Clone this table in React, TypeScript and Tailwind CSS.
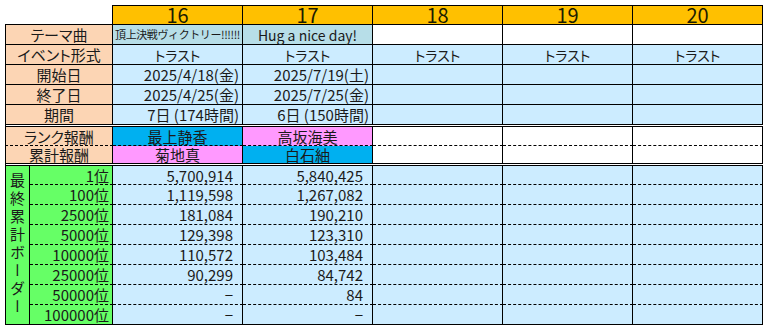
import type { ReactNode } from "react"

const font = "font-['Noto_Sans_CJK_JP','Noto_Sans',sans-serif]"

const LABEL = "bg-[#fcd5b4]"
const BLUE = "bg-[#ccecff]"
const AQUA = "bg-[#b7dee8]"
const CYAN = "bg-[#00b0f0]"
const PINK = "bg-[#ff99ff]"
const GREEN = "bg-[#66ff66]"

function Cell({
  className = "",
  children,
}: {
  className?: string
  children?: ReactNode
}) {
  return (
    <div className={`flex items-center whitespace-nowrap border-r border-b border-black leading-none ${className}`}>
      {children}
    </div>
  )
}

const ranks = ["1位", "100位", "2500位", "5000位", "10000位", "25000位", "50000位", "100000位"]
const border16 = ["5,700,914", "1,119,598", "181,084", "129,398", "110,572", "90,299", "−", "−"]
const border17 = ["5,840,425", "1,267,082", "190,210", "123,310", "103,484", "84,742", "84", "−"]

export default function App() {
  const dash = "[border-bottom-style:dashed]"

  return (
    <div className={`min-h-[326px] w-[764px] bg-white pt-[5px] pl-[5px] text-[#1a1a1a] ${font}`}>
      <div className="grid grid-cols-[25px_83px_repeat(5,130px)] grid-rows-[20px_20px_20px_20px_20px_20px_2px_19px_18px_2px_19px_20px_20px_20px_20px_20px_20px_20px]">
        {/* header row */}
        <div className="col-span-2 border-r border-b border-black" />
        {[16, 17, 18, 19, 20].map((n) => (
          <Cell key={n} className="justify-center border-t bg-[#ffc000] text-[20px] text-[#1c1c00]">
            <span className="leading-[18px]">{n}</span>
          </Cell>
        ))}

        {/* テーマ曲 */}
        <Cell className={`col-span-2 justify-center border-l ${LABEL} text-[15px] [font-feature-settings:'palt']`}>テーマ曲</Cell>
        <Cell className={`justify-center ${AQUA} text-[11px] tracking-[-0.4px]`}>頂上決戦ヴィクトリー!!!!!!</Cell>
        <Cell className={`justify-center ${AQUA} text-[14px]`}>Hug a nice day!</Cell>
        <Cell className="bg-white" />
        <Cell className="bg-white" />
        <Cell className="bg-white" />

        {/* イベント形式 */}
        <Cell className={`col-span-2 justify-center border-l ${LABEL} text-[15px] [font-feature-settings:'palt']`}>イベント形式</Cell>
        {[0, 1, 2, 3, 4].map((i) => (
          <Cell key={i} className={`justify-center ${BLUE} text-[14px] [font-feature-settings:'palt']`}>
            トラスト
          </Cell>
        ))}

        {/* 開始日 */}
        <Cell className={`col-span-2 justify-center border-l ${LABEL} text-[15px]`}>開始日</Cell>
        <Cell className={`justify-end pr-[3px] ${BLUE} text-[15px]`}>2025/4/18(金)</Cell>
        <Cell className={`justify-end pr-[3px] ${BLUE} text-[15px]`}>2025/7/19(土)</Cell>
        <Cell className={BLUE} />
        <Cell className={BLUE} />
        <Cell className={BLUE} />

        {/* 終了日 */}
        <Cell className={`col-span-2 justify-center border-l ${LABEL} text-[15px]`}>終了日</Cell>
        <Cell className={`justify-end pr-[3px] ${BLUE} text-[15px]`}>2025/4/25(金)</Cell>
        <Cell className={`justify-end pr-[3px] ${BLUE} text-[15px]`}>2025/7/25(金)</Cell>
        <Cell className={BLUE} />
        <Cell className={BLUE} />
        <Cell className={BLUE} />

        {/* 期間 */}
        <Cell className={`col-span-2 justify-center border-l ${LABEL} text-[15px]`}>期間</Cell>
        <Cell className={`justify-end pr-[3px] ${BLUE} text-[15px]`}>7日 (174時間)</Cell>
        <Cell className={`justify-end pr-[3px] ${BLUE} text-[15px]`}>6日 (150時間)</Cell>
        <Cell className={BLUE} />
        <Cell className={BLUE} />
        <Cell className={BLUE} />

        <div className="col-span-7 border-b border-l border-black bg-white" />

        {/* 報酬 */}
        <Cell className={`col-span-2 justify-center border-l ${dash} ${LABEL} text-[15px] [font-feature-settings:'palt']`}>ランク報酬</Cell>
        <Cell className={`justify-center ${dash} ${CYAN} text-[15px]`}>最上静香</Cell>
        <Cell className={`justify-center ${dash} ${PINK} text-[15px]`}>高坂海美</Cell>
        <Cell className={`${dash} bg-white`} />
        <Cell className={`${dash} bg-white`} />
        <Cell className={`${dash} bg-white`} />

        <Cell className={`col-span-2 justify-center border-l ${LABEL} text-[15px]`}>累計報酬</Cell>
        <Cell className={`justify-center ${PINK} text-[15px]`}>菊地真</Cell>
        <Cell className={`justify-center ${CYAN} text-[15px]`}>白石紬</Cell>
        <Cell className="bg-white" />
        <Cell className="bg-white" />
        <Cell className="bg-white" />

        <div className="col-span-7 border-b border-l border-black bg-white" />

        {/* 最終累計ボーダー */}
        <Cell className={`row-span-8 justify-center border-l ${GREEN}`}>
          <span className="text-[15px] leading-none tracking-[3px] [text-orientation:upright] [writing-mode:vertical-rl]">
            最終累計ボーダー
          </span>
        </Cell>
        {ranks.map((r, i) => {
          const last = i === ranks.length - 1
          const b = last ? "" : dash
          return [
            <Cell key={`r${i}`} className={`col-start-2 justify-end pr-[3px] ${b} ${GREEN} text-[15px]`}>
              {r}
            </Cell>,
            <Cell key={`a${i}`} className={`justify-end pr-[9px] ${b} ${BLUE} text-[15px]`}>
              {border16[i]}
            </Cell>,
            <Cell key={`b${i}`} className={`justify-end pr-[9px] ${b} ${BLUE} text-[15px]`}>
              {border17[i]}
            </Cell>,
            <Cell key={`c${i}`} className={`${b} ${BLUE}`} />,
            <Cell key={`d${i}`} className={`${b} ${BLUE}`} />,
            <Cell key={`e${i}`} className={`${b} ${BLUE}`} />,
          ]
        })}
      </div>
    </div>
  )
}
